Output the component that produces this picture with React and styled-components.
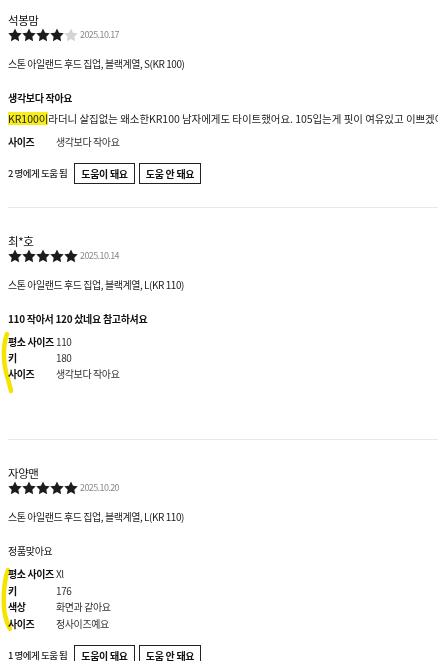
import React from 'react';
import styled, { createGlobalStyle } from 'styled-components';

const GlobalStyle = createGlobalStyle`
  html, body {
    margin: 0;
    padding: 0;
    background: #fff;
    overflow: hidden;
  }
  body {
    font-family: "Noto Sans CJK KR", "Noto Sans", sans-serif;
    color: #222;
  }
`;

const reviews = [
  {
    name: '석봉맘',
    rating: 4,
    date: '2025.10.17',
    product: '스톤 아일랜드 후드 집업, 블랙계열, S(KR 100)',
    title: '생각보다 작아요',
    titleBold: true,
    body: true,
    rows: [['사이즈', '생각보다 작아요']],
    helpful: 2,
  },
  {
    name: '최*호',
    rating: 5,
    date: '2025.10.14',
    product: '스톤 아일랜드 후드 집업, 블랙계열, L(KR 110)',
    title: '110 작아서 120 샀네요 참고하셔요',
    titleBold: true,
    rows: [
      ['평소 사이즈', '110'],
      ['키', '180'],
      ['사이즈', '생각보다 작아요'],
    ],
    mark: 'M7 4 C3 15, 3 30, 6 42 C8 50, 10 56, 11 61',
  },
  {
    name: '자양맨',
    rating: 5,
    date: '2025.10.20',
    product: '스톤 아일랜드 후드 집업, 블랙계열, L(KR 110)',
    title: '정품맞아요',
    titleBold: false,
    rows: [
      ['평소 사이즈', 'Xl'],
      ['키', '176'],
      ['색상', '화면과 같아요'],
      ['사이즈', '정사이즈예요'],
    ],
    mark: 'M8 8 C3 22, 3 42, 5 53 C6 58, 8 63, 10 67',
    helpful: 1,
    loose: true,
  },
];

const List = styled.div`
  display: flex;
  flex-direction: column;
`;

const Review = styled.section`
  margin-left: 8px;
  padding: 25px 0 24px;
  border-bottom: 1px solid #e8e8e8;
  &:first-child {
    padding-top: 12px;
  }
`;

const Name = styled.div`
  font-size: 11.5px;
  line-height: 16px;
  letter-spacing: -0.4px;
  color: #111;
`;

const RatingRow = styled.div`
  display: flex;
  align-items: center;
  height: 14px;
`;

const Stars = styled.div`
  display: flex;
`;

const Date = styled.span`
  margin-left: 2px;
  font-size: 9px;
  letter-spacing: -0.6px;
  color: #888;
  line-height: 14px;
`;

const Product = styled.div`
  margin-top: 15px;
  font-size: 10px;
  line-height: 14px;
  letter-spacing: -0.45px;
  color: #222;
`;

const Title = styled.div`
  margin-top: 20px;
  font-size: 10px;
  line-height: 14px;
  letter-spacing: -0.3px;
  font-weight: ${(p) => (p.$bold ? 700 : 400)};
  color: #111;
`;

const Body = styled.div`
  margin-top: 7px;
  font-size: 10.5px;
  line-height: 14px;
  letter-spacing: -0.05px;
  white-space: nowrap;
  color: #222;
`;

const Mark = styled.span`
  background: linear-gradient(transparent 8%, #f7ec1c 8%, #f7ec1c 95%, transparent 95%);
`;

const Rows = styled.div`
  position: relative;
  margin-top: 8px;
`;

const Row = styled.div`
  display: flex;
  font-size: 10px;
  line-height: ${(p) => (p.$loose ? 16.5 : 16)}px;
  letter-spacing: -0.4px;
  white-space: nowrap;
`;

const Label = styled.span`
  min-width: 48px;
  font-weight: 700;
  color: #111;
`;

const Value = styled.span`
  color: #333;
`;

const Highlighter = styled.svg`
  position: absolute;
  left: -8px;
  top: -4px;
  pointer-events: none;
  mix-blend-mode: multiply;
`;

const Helpful = styled.div`
  display: flex;
  align-items: center;
  height: 20px;
  margin-top: 13px;
  visibility: ${(p) => (p.$hidden ? 'hidden' : 'visible')};
`;

const Count = styled.span`
  font-size: 9.5px;
  letter-spacing: -0.5px;
  font-weight: 500;
  color: #222;
  margin-right: 7px;
`;

const HelpButton = styled.button`
  height: 21px;
  padding: 0 6px;
  margin-right: 4px;
  border: 1px solid #222;
  background: #fff;
  font-family: inherit;
  font-size: 10px;
  font-weight: 700;
  letter-spacing: -0.3px;
  color: #111;
  cursor: pointer;
`;

const Star = ({ filled }) => (
  <svg width="14" height="14" viewBox="0 0 24 24">
    <path
      d="M12 .8l3.5 7.3 8 1.1-5.8 5.6 1.4 8L12 19l-7.1 3.8 1.4-8L.5 9.2l8-1.1z"
      fill={filled ? '#1c1c1c' : '#d4d4d4'}
    />
  </svg>
);

const App = () => {
  return (
    <>
      <GlobalStyle />
      <List>
        {reviews.map((r) => (
          <Review key={r.name}>
            <Name>{r.name}</Name>
            <RatingRow>
              <Stars>
                {[0, 1, 2, 3, 4].map((i) => (
                  <Star key={i} filled={i < r.rating} />
                ))}
              </Stars>
              <Date>{r.date}</Date>
            </RatingRow>
            <Product>{r.product}</Product>
            <Title $bold={r.titleBold}>{r.title}</Title>
            {r.body && (
              <Body>
                <Mark>KR100이</Mark>라더니 살집없는 왜소한KR100 남자에게도 타이트했어요. 105입는게 핏이 여유있고 이쁘겠어요
              </Body>
            )}
            <Rows>
              {r.rows.map(([label, value]) => (
                <Row key={label} $loose={r.loose}>
                  <Label>{label}</Label>
                  <Value>{value}</Value>
                </Row>
              ))}
              {r.mark && (
                <Highlighter width="20" height="80" viewBox="0 0 20 80">
                  <path d={r.mark} fill="none" stroke="#f5e400" strokeWidth="4.5" strokeLinecap="round" />
                </Highlighter>
              )}
            </Rows>
            <Helpful $hidden={!r.helpful}>
              <Count>{r.helpful || 0} 명에게 도움 됨</Count>
              <HelpButton>도움이 돼요</HelpButton>
              <HelpButton>도움 안 돼요</HelpButton>
            </Helpful>
          </Review>
        ))}
      </List>
    </>
  );
};

export default App;
